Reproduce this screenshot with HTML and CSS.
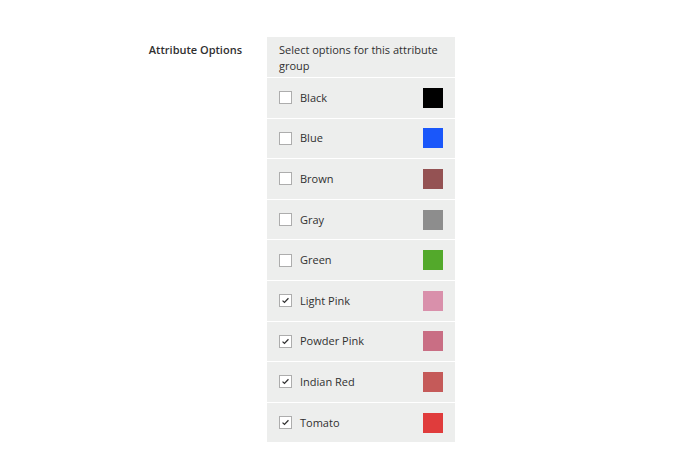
FILE: index.html
```html
<!DOCTYPE html>
<html>
<head>
<meta charset="utf-8">
<link rel="stylesheet" href="styles.css">
</head>
<body>
<div class="field">
  <div class="field-label">Attribute Options</div>
  <div class="panel">
    <div class="panel-head">Select options for this attribute group</div>
    <div class="row"><span class="cb"></span><span class="name">Black</span><span class="sw" style="background:#000000"></span></div>
    <div class="row"><span class="cb"></span><span class="name">Blue</span><span class="sw" style="background:#1a57fa"></span></div>
    <div class="row"><span class="cb"></span><span class="name">Brown</span><span class="sw" style="background:#945253"></span></div>
    <div class="row"><span class="cb"></span><span class="name">Gray</span><span class="sw" style="background:#8d8d8d"></span></div>
    <div class="row"><span class="cb"></span><span class="name">Green</span><span class="sw" style="background:#53a92b"></span></div>
    <div class="row"><span class="cb checked"><svg viewBox="0 0 13 13"><path d="M3 6.6 L5.3 8.8 L10 3.9" /></svg></span><span class="name">Light Pink</span><span class="sw" style="background:#d990ab"></span></div>
    <div class="row"><span class="cb checked"><svg viewBox="0 0 13 13"><path d="M3 6.6 L5.3 8.8 L10 3.9" /></svg></span><span class="name">Powder Pink</span><span class="sw" style="background:#c96e84"></span></div>
    <div class="row"><span class="cb checked"><svg viewBox="0 0 13 13"><path d="M3 6.6 L5.3 8.8 L10 3.9" /></svg></span><span class="name">Indian Red</span><span class="sw" style="background:#c55a59"></span></div>
    <div class="row"><span class="cb checked"><svg viewBox="0 0 13 13"><path d="M3 6.6 L5.3 8.8 L10 3.9" /></svg></span><span class="name">Tomato</span><span class="sw" style="background:#e03c3c"></span></div>
  </div>
</div>
</body>
</html>
```
FILE: styles.css
```css
html, body {
  margin: 0;
  padding: 0;
  background: #ffffff;
}
body {
  font-family: "Open Sans", "Liberation Sans", sans-serif;
  font-size: 11px;
  color: #303030;
}
.field {
  display: flex;
  align-items: flex-start;
  gap: 25px;
  padding-top: 37px;
}
.field-label {
  width: 242px;
  text-align: right;
  font-weight: 600;
  font-size: 11px;
  line-height: 16px;
  padding-top: 5px;
  color: #303030;
}
.panel {
  width: 188px;
  background: #edeeed;
}
.panel-head {
  padding: 5px 12px 3px 12px;
  line-height: 16px;
  color: #303030;
}
.row {
  box-sizing: border-box;
  height: 40.6px;
  border-top: 1px solid #ffffff;
  display: flex;
  align-items: center;
  padding: 0 12px;
}
.cb {
  box-sizing: border-box;
  width: 13px;
  height: 13px;
  border: 1px solid #adadad;
  background: #ffffff;
  display: flex;
  align-items: center;
  justify-content: center;
  flex: none;
}
.cb svg {
  width: 11px;
  height: 11px;
}
.cb svg path {
  fill: none;
  stroke: #303030;
  stroke-width: 1.5;
}
.name {
  margin-left: 8px;
  flex: 1;
  line-height: 16px;
}
.sw {
  width: 20px;
  height: 20px;
  flex: none;
}
```
